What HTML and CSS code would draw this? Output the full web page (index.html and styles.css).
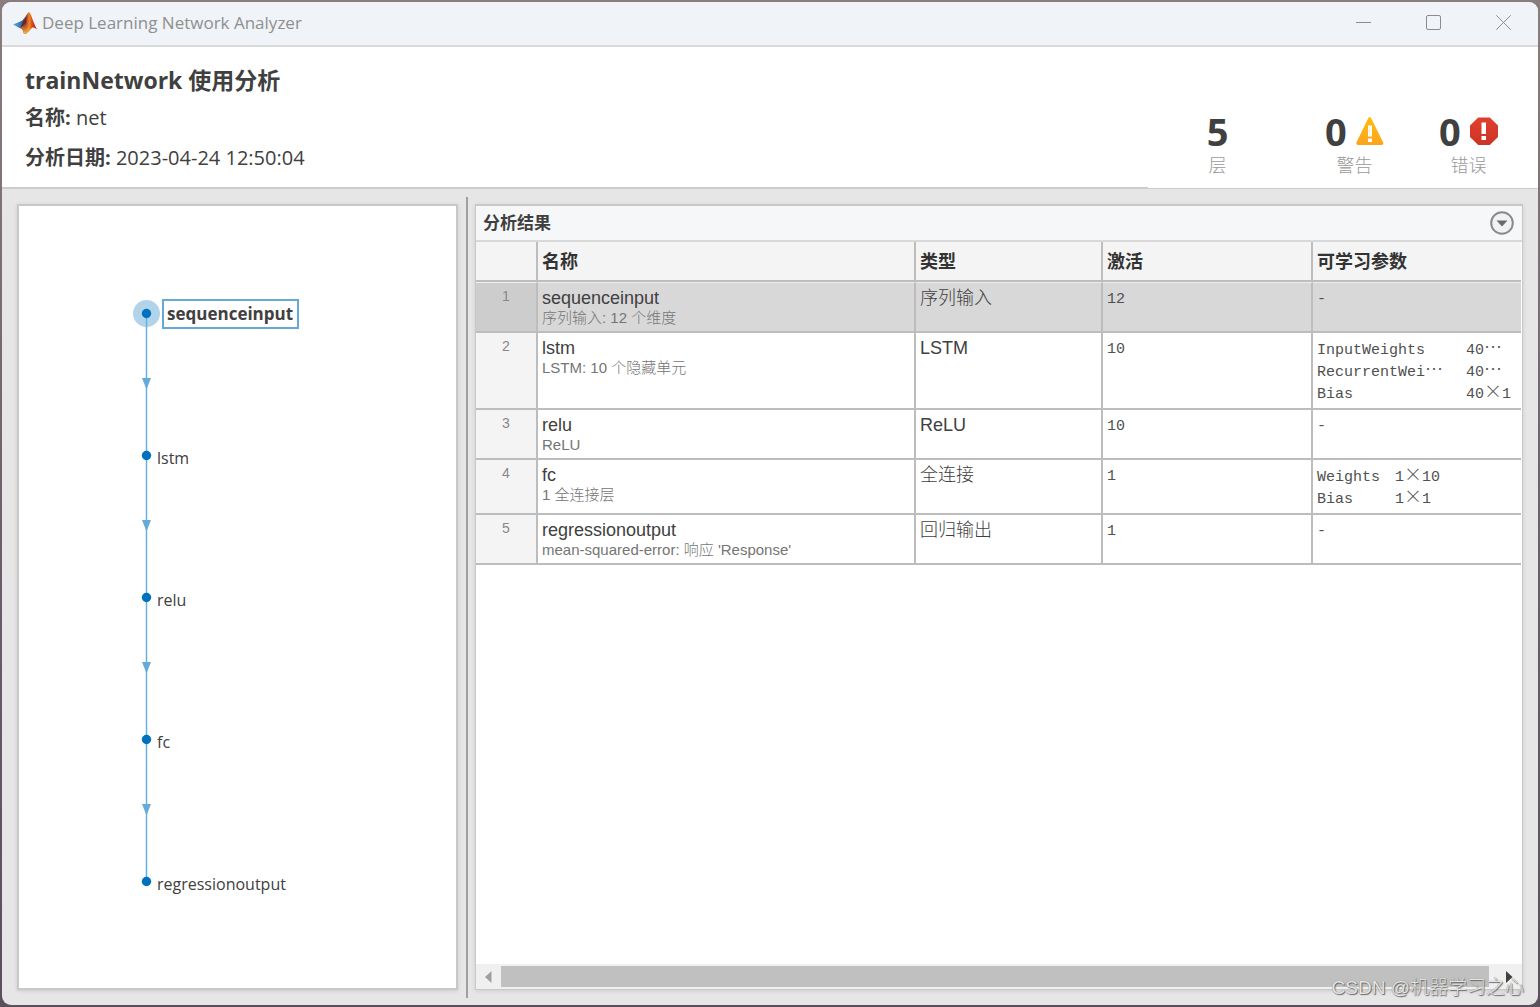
FILE: index.html
```html
<!DOCTYPE html>
<html lang="zh-CN">
<head>
<meta charset="utf-8">
<meta name="viewport" content="width=device-width, initial-scale=1">
<title>Deep Learning Network Analyzer</title>
<link rel="stylesheet" href="styles.css">
</head>
<body>
<div class="window">
  <header class="titlebar">
    <svg class="logo" viewBox="0 0 24 22" aria-hidden="true">
      <defs>
        <linearGradient id="blue" x1="0" y1="0" x2="1" y2="0"><stop offset="0" stop-color="#5fb4ea"/><stop offset="1" stop-color="#1d4f8c"/></linearGradient>
        <linearGradient id="flame" x1="0" y1="0" x2="1" y2="0"><stop offset="0" stop-color="#3d2a3a"/><stop offset=".35" stop-color="#7a2420"/><stop offset=".55" stop-color="#f08a24"/><stop offset=".72" stop-color="#d9481c"/><stop offset="1" stop-color="#a61c17"/></linearGradient>
        <linearGradient id="base" x1="0" y1="0" x2="0" y2="1"><stop offset="0" stop-color="#e2571e" stop-opacity="0"/><stop offset="1" stop-color="#ffc24a"/></linearGradient>
      </defs>
      <path fill="url(#blue)" d="M0 12.5 7.5 9.4C9.4 9 10.600 7.300 12 5l-1.500 7L6.500 16Z"/>
      <path fill="url(#flame)" d="M6.500 16C9 14.500 12 3 16 0c1.600 0 4.200 10.500 8 17.500-3-2.500-4.600-2.800-6.500.1-1.800 2.500-3.500 4-6.500 4.400-.600-3.500-2-5.600-4.500-6Z"/>
      <path fill="url(#base)" d="M6.500 16c4-1.500 6.500-5 9-9 .2 4 1 7 2 10.600-1.800 2.500-3.500 4-6.500 4.400-.600-3.500-2-5.600-4.500-6Z"/>
    </svg>
    <span class="caption">Deep Learning Network Analyzer</span>
    <div class="controls">
      <button type="button" aria-label="最小化"><svg viewBox="0 0 15 15"><path d="M0 7.500h15"/></svg></button>
      <button type="button" aria-label="最大化"><svg viewBox="0 0 15 15"><rect x=".5" y=".5" width="14" height="14" rx="1.500"/></svg></button>
      <button type="button" aria-label="关闭"><svg viewBox="0 0 15 15"><path d="M.3.300l14.400 14.400M14.700.300.300 14.700"/></svg></button>
    </div>
  </header>

  <section class="summary">
    <div class="about">
      <h1>trainNetwork 使用分析</h1>
      <p><b>名称:</b> net</p>
      <p><b>分析日期:</b> 2023-04-24 12:50:04</p>
    </div>
    <div class="stats">
      <div class="stat layers"><div class="count">5</div><div class="unit">层</div></div>
      <div class="stat">
        <div class="count">0
          <svg viewBox="0 0 28 28" aria-hidden="true">
            <defs><linearGradient id="warn" x1="0" y1="0" x2="0" y2="1"><stop offset="0" stop-color="#ffbd0c"/><stop offset="1" stop-color="#fba51f"/></linearGradient></defs>
            <path fill="url(#warn)" d="M12.300.900q1.400-1.600 2.800 0L27.200 25.500q.7 2.500-1.500 2.500H2Q0 28 .400 25.500Z"/>
            <path fill="#fff" d="M12 8.500h4v11h-4zM12 21.500h4V25h-4z"/>
            <path fill="#fba51f" d="M13.300 9.500h.4v9h-.4z" opacity=".3"/>
          </svg>
        </div>
        <div class="unit">警告</div>
      </div>
      <div class="stat">
        <div class="count">0
          <svg viewBox="0 0 28 28" aria-hidden="true">
            <defs><linearGradient id="err" x1="0" y1="0" x2="0" y2="1"><stop offset="0" stop-color="#e23f2d"/><stop offset="1" stop-color="#cb3427"/></linearGradient></defs>
            <path fill="url(#err)" d="M8.200.500h11.600L28 8.500v11.500L19.800 28H8.200L0 20V8.500Z"/>
            <path fill="#fff" d="M11.500 5.500h4.500v11.500h-4.500zM11.500 19h4.500v4h-4.500z"/>
          </svg>
        </div>
        <div class="unit">错误</div>
      </div>
    </div>
  </section>

  <main class="workspace">
    <section class="panel graph-panel" aria-label="网络图">
      <ol class="graph">
        <li class="selected"><svg viewBox="0 0 24 142"><circle class="halo" cx="13.500" cy="13.500" r="13.500"/><path class="edge" d="M13.500 13.500v142"/><path class="arrow" d="M9 78h9l-4.500 11.500Z"/><circle class="dot" cx="13.500" cy="13.500" r="4.700"/></svg><span class="label">sequenceinput</span></li>
        <li><svg viewBox="0 0 24 142"><path class="edge" d="M13.500 13.500v142"/><path class="arrow" d="M9 78h9l-4.500 11.500Z"/><circle class="dot" cx="13.500" cy="13.500" r="4.700"/></svg><span class="label">lstm</span></li>
        <li><svg viewBox="0 0 24 142"><path class="edge" d="M13.500 13.500v142"/><path class="arrow" d="M9 78h9l-4.500 11.500Z"/><circle class="dot" cx="13.500" cy="13.500" r="4.700"/></svg><span class="label">relu</span></li>
        <li><svg viewBox="0 0 24 142"><path class="edge" d="M13.500 13.500v142"/><path class="arrow" d="M9 78h9l-4.500 11.500Z"/><circle class="dot" cx="13.500" cy="13.500" r="4.700"/></svg><span class="label">fc</span></li>
        <li class="last"><svg viewBox="0 0 24 27"><circle class="dot" cx="13.500" cy="13.500" r="4.700"/></svg><span class="label">regressionoutput</span></li>
      </ol>
    </section>

    <div class="splitter"></div>

    <section class="panel results">
      <div class="results-head">
        <h2>分析结果</h2>
        <button type="button" aria-label="表选项">
          <svg viewBox="0 0 24 24"><circle cx="12" cy="12" r="10.800"/><path d="M6.500 9.500h11L12 15.500Z"/></svg>
        </button>
      </div>
      <div class="table-area">
        <table class="layers-table">
          <colgroup><col class="c-index"><col class="c-name"><col class="c-type"><col class="c-act"><col></colgroup>
          <thead>
            <tr><th aria-label="序号"></th><th>名称</th><th>类型</th><th>激活</th><th>可学习参数</th></tr>
          </thead>
          <tbody>
            <tr class="current"><td>1</td><td>sequenceinput<small>序列输入: 12 个维度</small></td><td>序列输入</td><td class="mono">12</td><td class="mono">-</td></tr>
            <tr><td>2</td><td>lstm<small>LSTM: 10 个隐藏单元</small></td><td>LSTM</td><td class="mono">10</td>
              <td class="mono"><div class="params wide"><span>InputWeights</span><span>40<i>…</i></span><span>RecurrentWei<i>…</i></span><span>40<i>…</i></span><span>Bias</span><span>40<i>×</i>1</span></div></td></tr>
            <tr><td>3</td><td>relu<small>ReLU</small></td><td>ReLU</td><td class="mono">10</td><td class="mono">-</td></tr>
            <tr><td>4</td><td>fc<small>1 全连接层</small></td><td>全连接</td><td class="mono">1</td>
              <td class="mono"><div class="params"><span>Weights</span><span>1<i>×</i>10</span><span>Bias</span><span>1<i>×</i>1</span></div></td></tr>
            <tr><td>5</td><td>regressionoutput<small>mean-squared-error: 响应 'Response'</small></td><td>回归输出</td><td class="mono">1</td><td class="mono">-</td></tr>
          </tbody>
        </table>
      </div>
      <div class="scrollbar">
        <button type="button" aria-label="向左滚动"><svg viewBox="0 0 7 12"><path fill="#a0a0a0" d="M6.500 0v12L0 6Z"/></svg></button>
        <div class="thumb"></div>
        <button class="right" type="button" aria-label="向右滚动"><svg viewBox="0 0 7 12"><path fill="#404040" d="M0 0v12l6.500-6Z"/></svg></button>
      </div>
    </section>
  </main>
</div>
<div class="watermark">CSDN @机器学习之心</div>
</body>
</html>
```

FILE: styles.css
```css
* { box-sizing: border-box; }

body {
  margin: 0;
  padding: 2px;
  min-height: 100vh;
  display: flex;
  position: relative;
  background: linear-gradient(#8a7d7d, #665d68 60%, #5a505c);
  color: #404040;
  font-family: "Open Sans", "Noto Sans CJK SC", sans-serif;
}

h1, h2, p, ol { margin: 0; padding: 0; }
button { padding: 0; border: 0; background: none; display: flex; align-items: center; justify-content: center; }

.window {
  flex: 1;
  min-width: 0;
  display: flex;
  flex-direction: column;
  background: #e6e6e6;
  border-radius: 9px;
  overflow: hidden;
}

/* Title bar */
.titlebar {
  display: flex;
  align-items: center;
  height: 45px;
  padding: 0 11px 2px 11px;
  background: #f0f3f7;
  border-bottom: 2px solid #dadada;
  color: #8f8f8f;
}
.logo { width: 24px; height: 22px; margin-right: 5px; }
.caption { font-size: 17px; line-height: 24px; }
.controls { display: flex; margin-left: auto; gap: 22px; }
.controls button { width: 48px; height: 30px; }
.controls svg { width: 15px; height: 15px; fill: none; stroke: #8c8c8c; }

/* Summary */
.summary {
  display: flex;
  justify-content: space-between;
  background: #fff;
  border-bottom: 2px solid #ccc;
}
.about { padding: 14px 0 8px 23px; font-size: 20px; line-height: 38px; }
.about h1 { font-size: 23px; line-height: 38px; }
.about p { height: 40px; }
.stats {
  display: flex;
  justify-content: flex-end;
  gap: 55px;
  width: 390px;
  margin-bottom: -1px;
  padding: 61px 40px 0 0;
  background: #fff;
}
.stat { width: 59px; text-align: center; }
.layers { margin-right: 23px; }
.count {
  display: flex;
  align-items: center;
  justify-content: space-between;
  font-size: 38px;
  line-height: 46px;
  font-weight: 700;
}
.layers .count { justify-content: center; }
.count svg { width: 28px; height: 28px; }
.unit { font-size: 18px; line-height: 22px; font-weight: 300; color: #999; }

/* Workspace */
.workspace {
  flex: 1;
  display: flex;
  padding: 8px 15px 7px;
}
.panel {
  margin: 7px 0 8px;
  background: #fff;
  border: 2px solid #c8c8c8;
  box-shadow: 0 1px 4px rgba(0, 0, 0, .12);
}
.graph-panel { flex: 0 0 441px; padding: 94px 0 0 114px; }
.splitter { width: 2px; margin: 0 7px 0 8px; background: #a0a0a0; }

.graph { list-style: none; font-size: 16px; line-height: 24px; }
.graph li { display: flex; align-items: flex-start; height: 142px; }
.graph svg { width: 24px; height: 142px; overflow: visible; }
.graph .last { height: 30px; }
.last svg { height: 27px; }
.label { padding-top: 4px; }
.selected .label {
  margin: -1px 0 0 5px;
  padding: 0 4px 0 3px;
  border: 2px solid #66a9d7;
  font-size: 17px;
  line-height: 26px;
  font-weight: 700;
}
.halo { fill: #b2d4eb; }
.edge { stroke: #66b0dc; stroke-width: 1.500px; }
.arrow { fill: #66aad8; }
.dot { fill: #0072bd; }

/* Results */
.results {
  flex: 1;
  min-width: 0;
  display: flex;
  flex-direction: column;
  border-width: 2px 1px 1px;
}
.results-head {
  display: flex;
  align-items: center;
  justify-content: space-between;
  height: 36px;
  padding: 0 8px 0 7px;
  background: #f6f7f9;
  border-bottom: 2px solid #d8d8d8;
}
h2 { font-size: 17px; line-height: 24px; }
.results-head svg { width: 24px; height: 24px; }
.results-head circle { fill: #f2f2f2; stroke: #8a8a8a; stroke-width: 2px; }
.results-head path { fill: #6a6a6a; }

.table-area { flex: 1; padding-right: 1px; }
.layers-table {
  width: 100%;
  table-layout: fixed;
  border-collapse: separate;
  border-spacing: 0;
  font-family: "Liberation Sans", "Noto Sans CJK SC", sans-serif;
  font-size: 18px;
  line-height: 20px;
}
.c-index { width: 62px; }
.c-name { width: 378px; }
.c-type { width: 187px; }
.c-act { width: 210px; }
th, td {
  padding: 5px 4px 3px;
  border: solid #bdbdbd;
  border-width: 0 2px 2px 0;
  vertical-align: top;
  text-align: left;
  font-weight: 300;
}
th { height: 40px; padding-top: 10px; background: #f4f4f4; color: #333; font-weight: 700; }
td { height: 50px; }
th:last-child, td:last-child { border-right: 0; }
td:first-child { padding-top: 3px; text-align: center; font-size: 14px; background: #f4f4f4; color: #888; }
.current td { border-top: 1px solid #eee; background: #d8d8d8; }
.current td:first-child { background: #cdcdcd; }
small { display: block; font-size: 15px; line-height: 20px; color: #757575; }
.mono {
  padding: 6px 4px 2px;
  font-family: "Liberation Mono", "Noto Sans CJK SC", monospace;
  font-size: 15px;
  line-height: 22px;
  color: #505050;
}
.mono i { font: 18px/0 "Noto Sans CJK SC", sans-serif; font-weight: 300; }
.params { display: grid; grid-template-columns: max-content max-content; grid-auto-rows: 22px; column-gap: 15px; margin-top: 1px; }
.params.wide { column-gap: 23px; }

.scrollbar { display: flex; height: 25px; padding: 2px 1px 2px 0; background: #f0f0f0; }
.scrollbar button { flex: 0 0 25px; }
.scrollbar .right { flex-basis: 32px; padding-left: 8px; }
.scrollbar svg { width: 7px; height: 12px; }
.thumb { flex: 1; background: #c0c0c0; }

.watermark {
  position: absolute;
  right: 16px;
  bottom: 6px;
  font: 19px/26px "Liberation Sans", "Noto Sans CJK SC", sans-serif;
  font-weight: 300;
  color: #e4e4e4;
  text-shadow: 1px 1px 1px #666, 0 0 1px #777;
}
```
